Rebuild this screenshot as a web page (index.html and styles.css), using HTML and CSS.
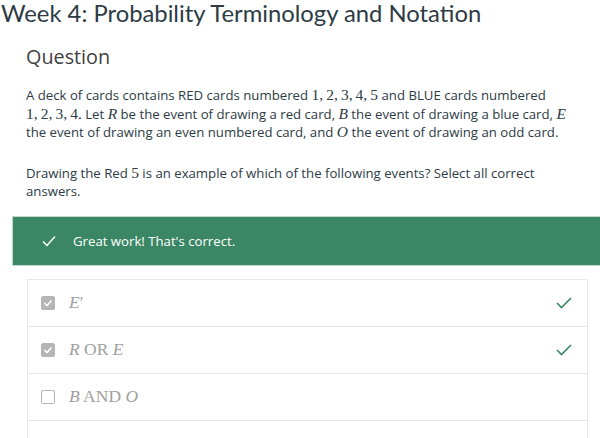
FILE: index.html
```html
<!DOCTYPE html>
<html lang="en">
<head>
  <meta charset="UTF-8" />
  <title>Week 4: Probability Terminology and Notation</title>
  <link rel="stylesheet" href="styles.css">
</head>
<body>

  <h1 class="page-title">Week 4: Probability Terminology and Notation</h1>

  <section class="question">
    <h2>Question</h2>
    <p>A deck of cards contains RED cards numbered <span class="m">1,&#8201;2,&#8201;3,&#8201;4,&#8201;5</span> and BLUE cards numbered
      <span class="m">1,&#8201;2,&#8201;3,&#8201;4.</span> Let <i class="m">R</i> be the event of drawing a red card, <i class="m">B</i> the event of drawing a blue card, <i class="m">E</i>
      the event of drawing an even numbered card, and <i class="m">O</i> the event of drawing an odd card.</p>
    <p>Drawing the Red <span class="m">5</span> is an example of which of the following events? Select all correct answers.</p>
  </section>

  <div class="feedback">
    <svg class="feedback-icon" width="14" height="14" viewBox="0 0 14 14"><path d="M1 7.5 L5 11.5 L13 2.5" fill="none" stroke="#fff" stroke-width="1.5"/></svg>
    <span>Great work! That's correct.</span>
  </div>

  <div class="answers">
    <div class="answer">
      <span class="box checked"><svg width="10" height="10" viewBox="0 0 10 10"><path d="M1.5 5 L4 7.5 L8.5 2.5" fill="none" stroke="#fff" stroke-width="1.6"/></svg></span>
      <span class="label"><i>E</i>&#8242;</span>
      <svg class="ok" width="16" height="12" viewBox="0 0 16 12"><path d="M1 6 L5.5 10.5 L15 1" fill="none" stroke="#3b8765" stroke-width="1.6"/></svg>
    </div>
    <div class="answer">
      <span class="box checked"><svg width="10" height="10" viewBox="0 0 10 10"><path d="M1.5 5 L4 7.5 L8.5 2.5" fill="none" stroke="#fff" stroke-width="1.6"/></svg></span>
      <span class="label"><i>R</i> OR <i>E</i></span>
      <svg class="ok" width="16" height="12" viewBox="0 0 16 12"><path d="M1 6 L5.5 10.5 L15 1" fill="none" stroke="#3b8765" stroke-width="1.6"/></svg>
    </div>
    <div class="answer">
      <span class="box"></span>
      <span class="label"><i>B</i> AND <i>O</i></span>
    </div>
    <div class="answer"></div>
  </div>

</body>
</html>
```

FILE: styles.css
```css
body {
  margin: 0;
  font-family: "Open Sans", sans-serif;
  color: #2d3b45;
  background: #fff;
}

.page-title {
  font-family: Lato, sans-serif;
  font-weight: normal;
  font-size: 23.8px;
  line-height: 26px;
  margin: 0;
  padding: 0 0 0 1px;
  color: #2d3b45;
}

.question {
  padding: 17px 26px 0 26px;
}

.question h2 {
  font-weight: normal;
  font-size: 19.8px;
  line-height: 28px;
  margin: 0 0 15px 0;
  color: #3f3f3f;
}

.question p {
  font-size: 13.2px;
  line-height: 18.5px;
  margin: 0 0 22px 0;
  color: #2d3b45;
}

.question p:last-child {
  margin-bottom: 15px;
}

.m {
  font-family: "Liberation Serif", serif;
  font-size: 15.5px;
  line-height: 1;
  white-space: nowrap;
}

.feedback {
  margin: 0 0 0 12px;
  height: 50px;
  background: #3b8765;
  border: 1px solid #c4d9cd;
  border-right: none;
  color: #fff;
  display: flex;
  align-items: center;
  gap: 17px;
  padding-left: 29px;
  font-size: 13.2px;
  box-sizing: border-box;
}

.answers {
  margin: 13px 12px 0 27px;
  border: 1px solid #e8e8e8;
  border-bottom: none;
}

.answer {
  height: 46px;
  border-bottom: 1px solid #e6e6e6;
  display: flex;
  align-items: center;
  padding: 0 15px 0 13px;
  color: #a0a0a0;
}

.box {
  width: 14px;
  height: 14px;
  box-sizing: border-box;
  border: 1px solid #b5b5b5;
  border-radius: 2px;
  display: flex;
  align-items: center;
  justify-content: center;
}

.box.checked {
  background: #b5b5b5;
}

.label {
  margin-left: 14px;
  font-family: "Liberation Serif", serif;
  font-size: 17.5px;
  flex: 1;
}
```
